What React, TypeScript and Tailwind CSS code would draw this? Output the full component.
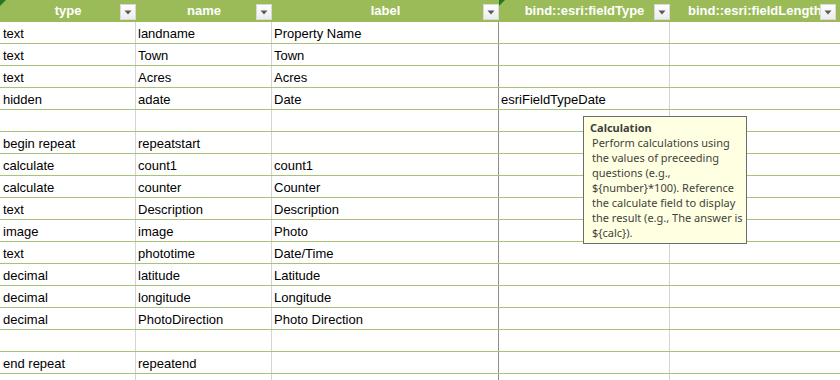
import type { ReactNode } from 'react'

const rows: string[][] = [
  ['text', 'landname', 'Property Name', ''],
  ['text', 'Town', 'Town', ''],
  ['text', 'Acres', 'Acres', ''],
  ['hidden', 'adate', 'Date', 'esriFieldTypeDate'],
  ['', '', '', ''],
  ['begin repeat', 'repeatstart', '', ''],
  ['calculate', 'count1', 'count1', ''],
  ['calculate', 'counter', 'Counter', ''],
  ['text', 'Description', 'Description', ''],
  ['image', 'image', 'Photo', ''],
  ['text', 'phototime', 'Date/Time', ''],
  ['decimal', 'latitude', 'Latitude', ''],
  ['decimal', 'longitude', 'Longitude', ''],
  ['decimal', 'PhotoDirection', 'Photo Direction', ''],
  ['', '', '', ''],
  ['end repeat', 'repeatend', '', ''],
  ['', '', '', ''],
]

const cols = 'grid grid-cols-[136px_136px_227px_171px_170px]'

function FilterButton({ className = 'right-0' }: { className?: string }) {
  return (
    <span
      className={`absolute top-[4px] flex h-[16px] w-[16px] items-center justify-center border border-[#d9d9d9] bg-gradient-to-b from-white to-[#ececec] ${className}`}
    >
      <svg width="8" height="5" viewBox="0 0 8 5">
        <polygon points="0.5,0.5 7.5,0.5 4,4.5" fill="#5a5a5a" />
      </svg>
    </span>
  )
}

function Marker() {
  return (
    <svg className="absolute left-0 top-0" width="6" height="6" viewBox="0 0 6 6">
      <polygon points="0,0 6,0 0,6" fill="#1f7a26" />
    </svg>
  )
}

function HeadCell({ children, marker, last }: { children: ReactNode; marker?: boolean; last?: boolean }) {
  return (
    <div className={`relative flex h-[22px] items-center ${last ? 'justify-start pl-[18px]' : 'justify-center'}`}>
      {marker && <Marker />}
      <span className="whitespace-nowrap">{children}</span>
      <FilterButton className={last ? 'right-[4px]' : 'right-0'} />
    </div>
  )
}

export default function App() {
  return (
    <div className="relative h-[380px] w-[840px] overflow-hidden bg-white font-['Liberation_Sans',Arial,sans-serif] text-[13px] text-black">
      <div className={`${cols} bg-[#9bbb59] font-bold text-white`}>
        <HeadCell marker>type</HeadCell>
        <HeadCell>name</HeadCell>
        <HeadCell>label</HeadCell>
        <HeadCell marker>bind::esri:fieldType</HeadCell>
        <HeadCell last>bind::esri:fieldLength</HeadCell>
      </div>

      {rows.map((r, i) => (
        <div key={i} className={`${cols} h-[22px] border-b border-[#a9c27a]`}>
          <div className="flex items-end border-r border-[#d4d4d4] pb-[2px] pl-[3px] leading-[15px]">{r[0]}</div>
          <div className="flex items-end border-r border-[#d4d4d4] pb-[2px] pl-[2px] leading-[15px]">{r[1]}</div>
          <div className="flex items-end border-r border-[#8e8e8e] pb-[2px] pl-[2px] leading-[15px]">{r[2]}</div>
          <div className="flex items-end border-r border-[#d4d4d4] pb-[2px] pl-[2px] leading-[15px]">{r[3]}</div>
          <div />
        </div>
      ))}

      <div className="absolute left-[583px] top-[116px] h-[128px] w-[164px] border border-[#6b6b6b] bg-[#ffffe1] pl-[6px] pt-[3px] font-['Noto_Sans','Open_Sans',sans-serif] text-[11px] leading-[15px] text-[#3f3f3f]">
        <div className="font-bold">Calculation</div>
        <div className="whitespace-nowrap pl-[2px]">
          <div>Perform calculations using</div>
          <div>the values of preceeding</div>
          <div>questions (e.g.,</div>
          <div>{'${number}*100). Reference'}</div>
          <div>the calculate field to display</div>
          <div>the result (e.g., The answer is</div>
          <div>{'${calc}).'}</div>
        </div>
      </div>
    </div>
  )
}
